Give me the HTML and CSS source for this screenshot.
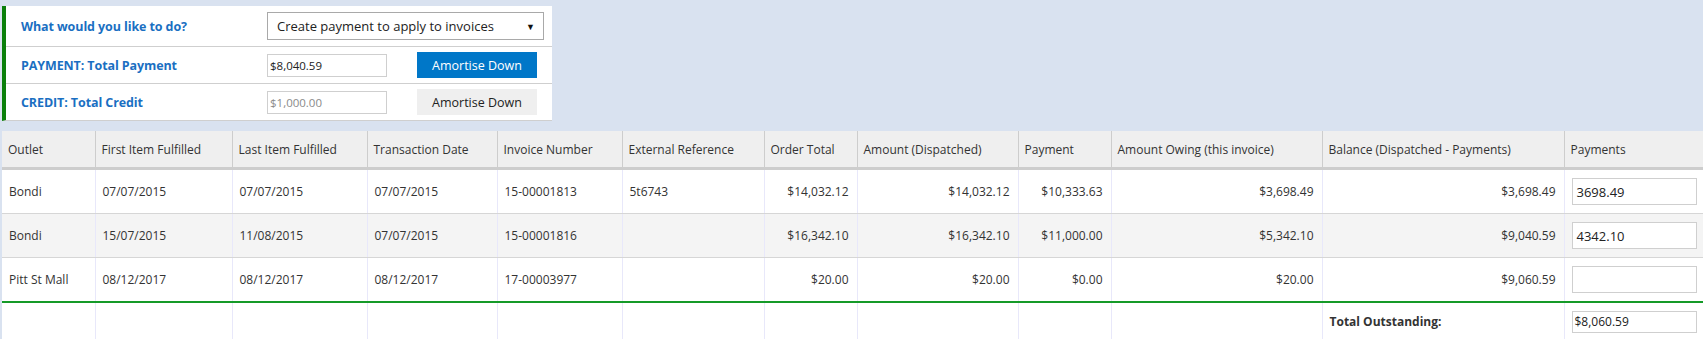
FILE: index.html
```html
<!DOCTYPE html>
<html>
<head>
<meta charset="utf-8">
<link rel="stylesheet" href="styles.css">
</head>
<body>
<div class="page">
  <div class="panel">
    <div class="prow prow-first">
      <div class="plabel">What would you like to do?</div>
      <div class="pcontrols">
        <div class="select"><span>Create payment to apply to invoices</span><span class="caret">&#9660;</span></div>
      </div>
    </div>
    <div class="prow">
      <div class="plabel">PAYMENT: Total Payment</div>
      <div class="pcontrols">
        <div class="pinput">$8,040.59</div>
        <div class="btn btn-primary">Amortise Down</div>
      </div>
    </div>
    <div class="prow">
      <div class="plabel">CREDIT: Total Credit</div>
      <div class="pcontrols">
        <div class="pinput pinput-disabled">$1,000.00</div>
        <div class="btn btn-default">Amortise Down</div>
      </div>
    </div>
  </div>

  <table class="grid">
    <colgroup>
      <col style="width:93px"><col style="width:137px"><col style="width:135px"><col style="width:130px">
      <col style="width:125px"><col style="width:142px"><col style="width:93px"><col style="width:161px">
      <col style="width:93px"><col style="width:211px"><col style="width:242px"><col style="width:139px">
    </colgroup>
    <thead>
      <tr>
        <th>Outlet</th><th>First Item Fulfilled</th><th>Last Item Fulfilled</th><th>Transaction Date</th>
        <th>Invoice Number</th><th>External Reference</th><th>Order Total</th><th>Amount (Dispatched)</th>
        <th>Payment</th><th>Amount Owing (this invoice)</th><th>Balance (Dispatched - Payments)</th><th>Payments</th>
      </tr>
    </thead>
    <tbody>
      <tr>
        <td>Bondi</td><td>07/07/2015</td><td>07/07/2015</td><td>07/07/2015</td><td>15-00001813</td><td>5t6743</td>
        <td class="num">$14,032.12</td><td class="num">$14,032.12</td><td class="num">$10,333.63</td>
        <td class="num">$3,698.49</td><td class="num">$3,698.49</td><td class="pay"><div class="tinput">3698.49</div></td>
      </tr>
      <tr class="alt">
        <td>Bondi</td><td>15/07/2015</td><td>11/08/2015</td><td>07/07/2015</td><td>15-00001816</td><td></td>
        <td class="num">$16,342.10</td><td class="num">$16,342.10</td><td class="num">$11,000.00</td>
        <td class="num">$5,342.10</td><td class="num">$9,040.59</td><td class="pay"><div class="tinput">4342.10</div></td>
      </tr>
      <tr class="last">
        <td>Pitt St Mall</td><td>08/12/2017</td><td>08/12/2017</td><td>08/12/2017</td><td>17-00003977</td><td></td>
        <td class="num">$20.00</td><td class="num">$20.00</td><td class="num">$0.00</td>
        <td class="num">$20.00</td><td class="num">$9,060.59</td><td class="pay"><div class="tinput"></div></td>
      </tr>
      <tr class="total">
        <td></td><td></td><td></td><td></td><td></td><td></td><td></td><td></td><td></td><td></td>
        <td class="total-label">Total Outstanding:</td><td class="pay"><div class="totinput">$8,060.59</div></td>
      </tr>
    </tbody>
  </table>
</div>
</body>
</html>
```

FILE: styles.css
```css
html, body {
  margin: 0;
  padding: 0;
}
body {
  background: #d9e2f0;
  font-family: "Open Sans", "Noto Sans", sans-serif;
  color: #333;
  overflow: hidden;
}
.page {
  padding: 6px 0 0 2px;
}
.panel {
  width: 546px;
  background: #fff;
  border-left: 4px solid #0b7f0b;
  border-bottom: 1px solid #cfcfcf;
}
.prow {
  display: flex;
  align-items: center;
  height: 36px;
  border-top: 1px solid #cfcfcf;
}
.prow-first {
  height: 40px;
  border-top: none;
}
.plabel {
  width: 246px;
  padding-left: 15px;
  color: #1a6fc2;
  font-weight: 700;
  font-size: 12.5px;
  letter-spacing: -0.1px;
}
.pcontrols {
  display: flex;
  align-items: center;
  gap: 30px;
}
.select {
  width: 258px;
  height: 26px;
  border: 1px solid #a9a9a9;
  display: flex;
  align-items: center;
  justify-content: space-between;
  padding: 0 8px 0 9px;
  font-size: 13px;
  color: #222;
}
.caret {
  font-size: 9px;
  color: #111;
}
.pinput {
  width: 116px;
  height: 21px;
  border: 1px solid #cfcfcf;
  padding-left: 2px;
  display: flex;
  align-items: center;
  font-size: 11.5px;
  color: #222;
}
.pinput-disabled {
  color: #8a8a8a;
}
.btn {
  width: 120px;
  height: 26px;
  display: flex;
  align-items: center;
  justify-content: center;
  font-size: 12.5px;
}
.btn-primary {
  background: #0077c8;
  color: #fff;
}
.btn-default {
  background: #efefef;
  color: #222;
}

.grid {
  margin-top: 10px;
  width: 1701px;
  table-layout: fixed;
  border-collapse: collapse;
  font-size: 12px;
}
.grid th {
  background: #efefef;
  height: 36px;
  padding: 0 6px;
  text-align: left;
  font-weight: 400;
  color: #333;
  border-left: 1px solid #cdcdcd;
  border-bottom: 3px solid #cdcdcd;
  white-space: nowrap;
  overflow: hidden;
}
.grid th:first-child {
  border-left: none;
}
.grid td {
  background: #fff;
  height: 43px;
  padding: 0 7px;
  border-left: 1px solid #e8e8fa;
  border-bottom: 1px solid #d6d6d6;
  white-space: nowrap;
  overflow: hidden;
  color: #333;
}
.grid td:first-child {
  border-left: none;
}
.grid tr.alt td {
  background: #f4f4f4;
}
.grid tr.last td {
  border-bottom: 2px solid #159a28;
}
.grid td.num {
  text-align: right;
  padding-right: 8px;
}
.grid td.pay {
  padding: 0 6px 0 7px;
}
.tinput {
  height: 25px;
  border: 1px solid #cfcfcf;
  background: #fff;
  display: flex;
  align-items: center;
  padding-left: 4px;
  font-size: 13px;
  color: #222;
}
.grid tr.total td {
  height: 37px;
  border-bottom: none;
}
.total-label {
  font-weight: 700;
  color: #111;
}
.totinput {
  height: 20px;
  border: 1px solid #cfcfcf;
  display: flex;
  align-items: center;
  padding-left: 2px;
  font-size: 12px;
  color: #222;
}
```
